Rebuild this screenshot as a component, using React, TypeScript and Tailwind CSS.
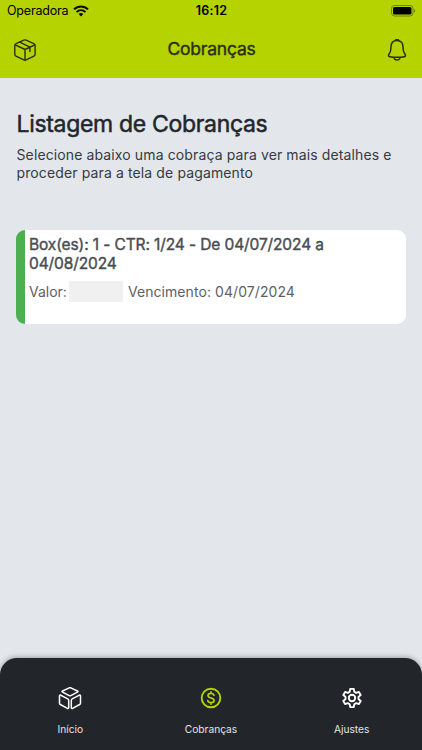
import type { ReactNode } from "react"

function WifiIcon() {
  return (
    <svg width="16" height="12" viewBox="0 0 16 12" fill="none" stroke="#0b0d00" strokeWidth="2">
      <path d="M1 4.4C5 .4 11 .4 15 4.4" />
      <path d="M3.5 7.1c2.6-2.5 6.4-2.5 9 0" />
      <path d="M8 11.4 5.6 9c1.3-1.2 3.5-1.2 4.8 0Z" fill="#0b0d00" stroke="none" />
    </svg>
  )
}

function BatteryIcon() {
  return (
    <svg width="25" height="12" viewBox="0 0 25 12" fill="none">
      <rect x="0.5" y="0.5" width="21.5" height="10.5" rx="3" stroke="#718000" />
      <rect x="2" y="2" width="18.5" height="7.5" rx="1.5" fill="#000" />
      <path d="M23.3 4.2c1.2.5 1.2 2.6 0 3.1Z" fill="#536000" />
    </svg>
  )
}

function PackageIcon() {
  return (
    <svg
      width="22"
      height="22"
      viewBox="0 0 22 22"
      fill="none"
      stroke="#2b3012"
      strokeWidth="1.4"
      strokeLinecap="round"
      strokeLinejoin="round"
    >
      <path d="M9.8 1.1 2.1 4.7Q.8 5.4.8 6.8v8.5q0 1.3 1.2 1.9l7.8 3.7q1.1.5 2.3 0l7.8-3.7q1.2-.6 1.2-1.9V6.8q0-1.4-1.3-2.1l-7.7-3.6q-1.1-.5-2.3 0Z" />
      <path d="m1.2 5.8 9.8 4.7 9.8-4.7M11 10.5v10.6M5.7 3.1l10.2 5v4.4" />
    </svg>
  )
}

function BellIcon() {
  return (
    <svg
      width="20"
      height="22"
      viewBox="0 0 20 22"
      fill="none"
      stroke="#2b3012"
      strokeWidth="1.5"
      strokeLinecap="round"
      strokeLinejoin="round"
    >
      <path d="M10 1.4c-4 0-6 2.7-6 6.4 0 4-.4 5.2-1.6 6.7-1.5 1.9-.9 3 .4 3.2 4.7.8 9.7.8 14.4 0 1.3-.2 1.9-1.3.4-3.2-1.2-1.5-1.6-2.7-1.6-6.7 0-3.7-2-6.4-6-6.4Z" />
      <path d="M8.4 1.2c.5-.8 2.7-.8 3.2 0M7.2 19.2c.7 2.3 4.9 2.3 5.6 0" />
    </svg>
  )
}

function BoxesIcon() {
  return (
    <svg
      width="24"
      height="24"
      viewBox="0 0 24 24"
      fill="none"
      stroke="currentColor"
      strokeWidth="1.5"
      strokeLinejoin="round"
    >
      <path d="M11.2 1.8 4.6 5q-1.1.6 0 1.2l6.6 3.4q.8.3 1.6 0l6.6-3.4q1.1-.6 0-1.2l-6.6-3.2q-.8-.3-1.6 0Z" />
      <path d="M3 9.3q-1.5-.6-1.5.8v6.9q0 1 .8 1.5l6.7 3.7q1.7.7 1.7-.8v-7q0-1-.9-1.5Z" />
      <path d="M21 9.3q1.5-.6 1.5.8v6.9q0 1-.8 1.5L15 22.2q-1.7.7-1.7-.8v-7q0-1 .9-1.5Z" />
    </svg>
  )
}

function DollarIcon() {
  return (
    <svg
      width="24"
      height="24"
      viewBox="0 0 24 24"
      fill="none"
      stroke="#b5d300"
      strokeWidth="1.9"
      strokeLinecap="round"
    >
      <circle cx="12" cy="12" r="9.3" />
      <path
        d="M15 9.2C14.6 7.9 13.5 7.3 12 7.3c-1.8 0-3 .9-3 2.3 0 1.5 1.2 2 3 2.4s3.1.9 3.1 2.5c0 1.4-1.3 2.2-3.1 2.2-1.7 0-2.9-.7-3.2-2.1M12 5.9v1.4M12 16.7v1.4"
        strokeWidth="1.7"
      />
    </svg>
  )
}

function GearIcon() {
  return (
    <svg
      width="24"
      height="24"
      viewBox="0 0 24 24"
      fill="none"
      stroke="currentColor"
      strokeWidth="1.9"
      strokeLinejoin="round"
    >
      <path d="M10.2 2.9h3.6l.5 2.9 1.9 1.1 2.7-1 1.8 3.1-2.2 1.9v2.2l2.2 1.9-1.8 3.1-2.7-1-1.9 1.1-.5 2.9h-3.6l-.5-2.9-1.9-1.1-2.7 1L3.3 15l2.2-1.9v-2.2L3.3 9l1.8-3.1 2.7 1 1.9-1.1Z" />
      <circle cx="12" cy="12" r="3.2" />
    </svg>
  )
}

function Tab({ label, children }: { label: string; children: ReactNode }) {
  return (
    <button className="flex flex-1 flex-col items-center pt-7 text-white">
      <span className="flex h-6 items-center">{children}</span>
      <span className="mt-3 text-[10.2px] leading-[14px] text-[#e2e3e4]">{label}</span>
    </button>
  )
}

export default function App() {
  return (
    <div className="flex h-[750px] w-[422px] flex-col overflow-hidden bg-[#e3e7ec] font-['Inter',sans-serif] text-[#22262b]">
      <header className="h-[78px] bg-[#b5d300]">
        <div className="grid h-[22px] grid-cols-3 items-center pl-[7px] pr-[6px] text-black">
          <div className="flex items-center">
            <span className="w-[66px] text-[12.5px] leading-[22px] tracking-[-0.2px]">Operadora</span>
            <WifiIcon />
          </div>
          <span className="text-center text-[12.5px] font-semibold tracking-[0.2px]">16:12</span>
          <div className="flex justify-end">
            <BatteryIcon />
          </div>
        </div>
        <div className="flex h-[55px] items-center justify-between pl-[14px] pr-[15px]">
          <PackageIcon />
          <h1 className="text-[17.5px] tracking-[-0.2px] text-[#2b3012] [-webkit-text-stroke:0.4px]">Cobranças</h1>
          <BellIcon />
        </div>
      </header>

      <main className="flex-1 px-4 pt-[31px]">
        <h2 className="pl-[0.5px] text-[23px] leading-[30px] tracking-[-0.32px] [-webkit-text-stroke:0.5px]">
          Listagem de Cobranças
        </h2>
        <p className="mt-[7px] pl-[0.5px] text-[14px] leading-[17.5px] tracking-[0.12px] text-[#363a40]">
          Selecione abaixo uma cobraça para ver mais detalhes e
          <br />
          proceder para a tela de pagamento
        </p>

        <section className="mt-[49px] h-[94px] w-[390px] rounded-[9px] border-l-[9px] border-[#4caf50] bg-white pl-1 pt-[6px]">
          <h3 className="text-[15.5px] leading-[18.5px] tracking-[-0.11px] text-[#494d52] [-webkit-text-stroke:0.4px]">
            Box(es): 1 - CTR: 1/24 - De 04/07/2024 a
            <br />
            04/08/2024
          </h3>
          <div className="mt-2 flex h-[21px] items-center text-[14px] text-[#5d6166]">
            <span>Valor:</span>
            <span className="ml-[2px] mr-[5px] h-[21px] w-[54px] bg-[#f0f0f1]" />
            <span className="tracking-[0.07px]">Vencimento: 04/07/2024</span>
          </div>
        </section>
      </main>

      <nav className="flex h-[92px] rounded-t-[17px] bg-[#22262b] shadow-[0_-1px_5px_rgba(0,0,0,0.3)]">
        <Tab label="Início">
          <BoxesIcon />
        </Tab>
        <Tab label="Cobranças">
          <DollarIcon />
        </Tab>
        <Tab label="Ajustes">
          <GearIcon />
        </Tab>
      </nav>
    </div>
  )
}
